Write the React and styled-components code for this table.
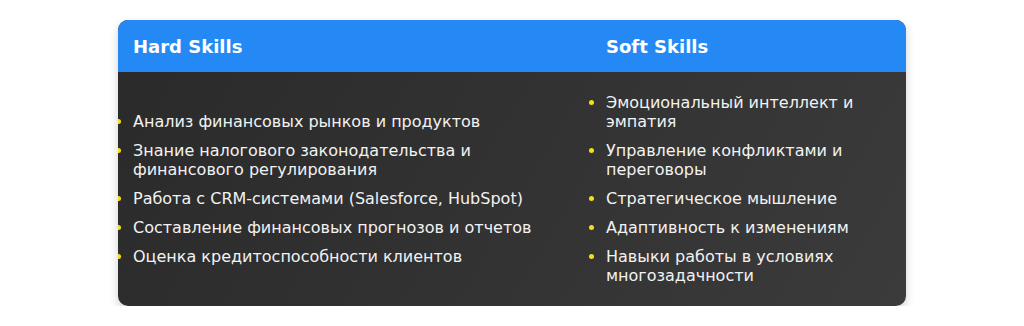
import React from 'react';
import styled, { createGlobalStyle } from 'styled-components';

const hardSkills = [
	'Анализ финансовых рынков и продуктов',
	'Знание налогового законодательства и финансового регулирования',
	'Работа с CRM-системами (Salesforce, HubSpot)',
	'Составление финансовых прогнозов и отчетов',
	'Оценка кредитоспособности клиентов',
];

const softSkills = [
	'Эмоциональный интеллект и эмпатия',
	'Управление конфликтами и переговоры',
	'Стратегическое мышление',
	'Адаптивность к изменениям',
	'Навыки работы в условиях многозадачности',
];

const App = () => {
	return (
		<>
			<GlobalStyle />
			<Page>
				<Card>
					<HeadCell>Hard Skills</HeadCell>
					<HeadCell>Soft Skills</HeadCell>
					<BodyCell>
						<List>
							{hardSkills.map((s) => <Item key={s}>{s}</Item>)}
						</List>
					</BodyCell>
					<BodyCell>
						<List>
							{softSkills.map((s) => <Item key={s}>{s}</Item>)}
						</List>
					</BodyCell>
				</Card>
			</Page>
		</>
	);
};

const GlobalStyle = createGlobalStyle`
	body {
		margin: 0;
		background: #ffffff;
		font-family: "DejaVu Sans", sans-serif;
	}
`;

const Page = styled.div`
	display: flex;
	justify-content: center;
	padding-top: 20px;
`;

const Card = styled.div`
	width: 788px;
	display: grid;
	grid-template-columns: 473px 1fr;
	grid-template-rows: 52px auto;
	border-radius: 10px;
	overflow: hidden;
	background: linear-gradient(120deg, #2a2a2a 0%, #323232 50%, #3b3b3b 100%);
	box-shadow: 0 4px 10px rgba(0, 0, 0, 0.18);
`;

const HeadCell = styled.div`
	display: flex;
	align-items: center;
	padding: 0 15px;
	background: #2589f5;
	color: #ffffff;
	font-size: 18px;
	font-weight: 700;
`;

const BodyCell = styled.div`
	display: flex;
	align-items: center;
	padding: 21px 15px 21px;
`;

const List = styled.ul`
	margin: 0;
	padding: 0;
	list-style: disc outside;
`;

const Item = styled.li`
	color: #f2f2f2;
	font-size: 16px;
	line-height: 19px;
	margin-bottom: 10px;

	&:last-child {
		margin-bottom: 0;
	}

	&::marker {
		color: #f5dd1f;
	}
`;

export default App;
